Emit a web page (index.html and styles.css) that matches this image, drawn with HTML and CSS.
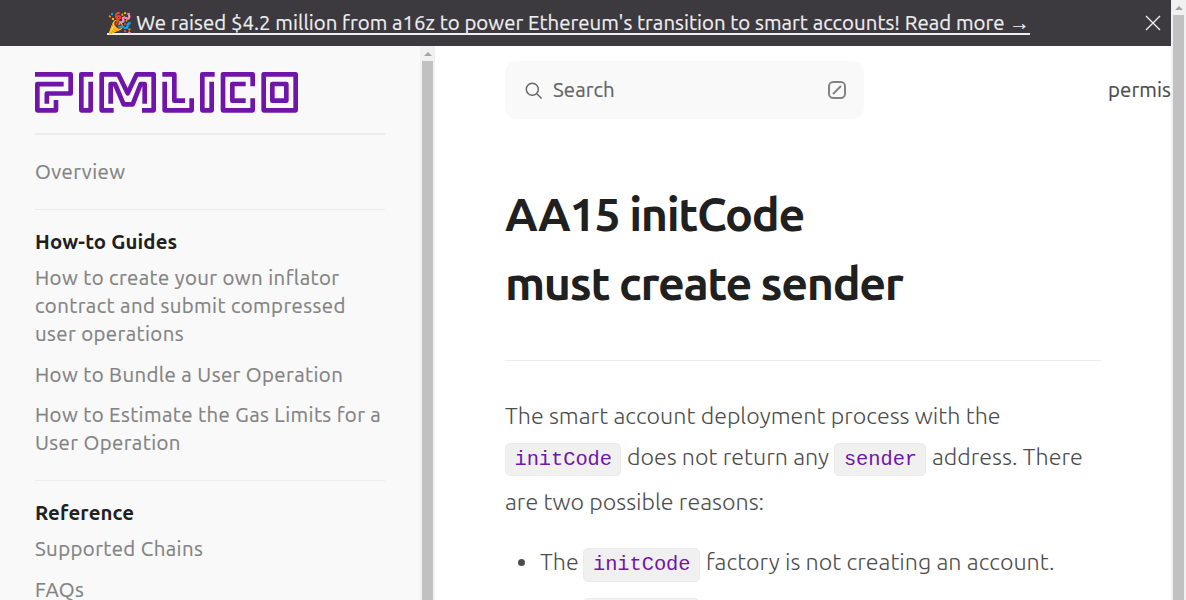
FILE: index.html
```html
<!DOCTYPE html>
<html lang="en">
<head>
<meta charset="utf-8">
<title>AA15 initCode must create sender</title>
<link rel="stylesheet" href="styles.css">
</head>
<body>
<div class="app">
  <div class="page">
    <header class="banner">
      <a class="banner-link"><span>🎉 We raised $4.2 million from a16z to power Ethereum's transition to smart accounts! Read more →</span></a>
      <svg class="close" viewBox="0 0 16 16"><path d="M1 1 15 15M15 1 1 15"/></svg>
    </header>
    <div class="body">
      <aside class="sidebar">
        <svg class="logo" viewBox="45 48 789 123">
          <path d="M45 55H152V112.500H80.500V143M131 84.500H52V163H108V132"/>
          <path d="M219 55H184V163H212V77"/>
          <path d="M281 163H245V55H295L323 112 350 55H401V163H366M272 143V84H285L311 145H338L362 84H374V143"/>
          <path d="M427 55H463V134H495M434 77V163H515V127"/>
          <path d="M584 55H547V163H575V77"/>
          <path d="M698 91V55H609V163H698V127M677 84H637V134H677"/>
          <path d="M731 55H827V163H731ZM757 84H799V134H757Z"/>
        </svg>
        <nav>
          <section class="group first"><a class="item">Overview</a></section>
          <section class="group">
            <h2>How-to Guides</h2>
            <a class="item">How to create your own inflator<br>contract and submit compressed<br>user operations</a>
            <a class="item">How to Bundle a User Operation</a>
            <a class="item">How to Estimate the Gas Limits for a<br>User Operation</a>
          </section>
          <section class="group">
            <h2>Reference</h2>
            <a class="item">Supported Chains</a>
            <a class="item">FAQs</a>
          </section>
        </nav>
      </aside>
      <div class="scrollbar"><i class="arrow"></i><i class="thumb"></i></div>
      <main class="main">
        <div class="topbar">
          <div class="search">
            <svg class="glass" viewBox="0 0 18 18"><circle cx="7.3" cy="7.3" r="6"/><path d="M11.8 11.8 16.6 16.6"/></svg>
            <span>Search</span>
            <svg class="slash" viewBox="0 0 18 18"><rect x="1" y="1" width="16" height="16" rx="4.2"/><path d="M5 13 13 5"/></svg>
          </div>
          <span class="crumb">permissionless.js</span>
        </div>
        <article>
          <h1>AA15 initCode<br>must create sender</h1>
          <p class="line l1">The smart account deployment process with the</p>
          <p class="line l2"><code>initCode</code><span class="mid">does not return any</span><code>sender</code><span class="end">address. There</span></p>
          <p class="line l3">are two possible reasons:</p>
          <ul>
            <li class="line"><i class="dot"></i><span class="the">The</span><code>initCode</code><span class="end">factory is not creating an account.</span></li>
            <li class="line next"><i class="dot"></i><span class="the">The</span><code>initCode</code></li>
          </ul>
        </article>
      </main>
    </div>
  </div>
  <div class="scrollbar"><i class="arrow"></i><i class="thumb"></i></div>
</div>
</body>
</html>
```
FILE: styles.css
```css
* { box-sizing: border-box; }
body { margin: 0; font-family: Ubuntu, "Noto Sans", sans-serif; font-size: 20.4px; overflow: hidden; background: #fff; }
h1, h2, p, ul { margin: 0; padding: 0; }
svg { fill: none; flex: none; }
.app { display: flex; width: 1186px; height: 600px; overflow: hidden; }
.page { width: 1171px; height: 600px; display: flex; flex-direction: column; overflow: hidden; }

.scrollbar { width: 15px; flex: none; background: #f1f1f1; display: flex; flex-direction: column; align-items: center; padding: 6px 2px 0; }
.arrow { border: 4px solid transparent; border-top: 0; border-bottom: 4px solid #a3a3a3; }
.thumb { width: 11px; flex: 1; margin: 5px 2px 0 0; background: #c1c1c1; align-self: flex-start; }

.banner { height: 46px; flex: none; background: #3c393f; color: #eeeef0; display: flex; align-items: center; padding: 0 10px 0 106.5px; justify-content: space-between; }
.banner-link { width: 923.5px; height: 24px; line-height: 24px; border-bottom: 2px solid #eeeef0; white-space: nowrap; letter-spacing: 0.04px; }
.banner-link, .item, .search span, .crumb { -webkit-text-stroke: 0.2px currentColor; }
.close { width: 16px; height: 16px; stroke: #eeeef0; stroke-width: 1.4; }

.body { flex: 1; display: flex; min-height: 0; }
.sidebar { width: 420px; flex: none; background: #f9f9f9; padding: 26px 35px 0; overflow: hidden; }
.logo { display: block; width: 263px; height: 41px; stroke: #7115aa; stroke-width: 14; stroke-linejoin: round; }
nav { margin-top: 20px; border-top: 2px solid #ececec; letter-spacing: 0.41px; }
.group { padding-top: 18px; border-top: 1px solid #ececec; }
.group.first { border: 0; padding-top: 23px; height: 74px; }
h2 { font-size: 20.4px; line-height: 28px; font-weight: 600; letter-spacing: 0.14px; color: #202020; margin-bottom: 8px; white-space: nowrap; }
.item { display: block; color: #838383; line-height: 28px; margin-bottom: 12.5px; white-space: nowrap; }
.group .item:last-child { margin-bottom: 23px; }

.main { flex: 1; min-width: 0; background: #fff; padding: 15px 0 0 70px; overflow: hidden; color: #4c4c4c; }
.topbar { height: 58px; display: flex; align-items: center; }
.search { width: 359px; height: 58px; flex: none; border-radius: 12px; background: #f9f9f9; color: #646464; display: flex; align-items: center; padding: 0 18px 1px 20px; }
.search span { margin-left: 10px; flex: 1; letter-spacing: 0.1px; }
.glass { width: 18px; height: 18px; stroke: #646464; stroke-width: 1.4; margin-top: 2px; }
.slash { width: 18px; height: 18px; stroke: #838383; stroke-width: 2; }
.crumb { margin-left: 244px; white-space: nowrap; margin-top: -2px; letter-spacing: 0.1px; }
article { width: 596px; }
h1 { margin-top: 61px; height: 181px; border-bottom: 1px solid #ececec; font-size: 46.6px; line-height: 69px; font-weight: 600; letter-spacing: -1.33px; color: #202020; white-space: nowrap; }
.line { height: 44px; display: flex; align-items: center; white-space: nowrap; font-size: 23.28px; font-weight: 300; color: #4c4c4c; }
.l1 { margin-top: 32px; }
.l2 { height: 42px; margin-top: -1px; }
.l2 span { margin-top: -2px; }
.l3 { margin-top: 1px; }
code { font: 400 20.4px "Liberation Mono", monospace; letter-spacing: -0.06px; color: #7115aa; background: #f0f0f0; border: 1px solid #ebebeb; border-radius: 5px; height: 33px; line-height: 31px; padding: 0 8.5px; flex: none; margin-top: 5px; }
.mid { width: 213px; padding-left: 5.5px; }
.end { padding-left: 5.5px; }
ul { margin-top: 16px; }
li code { height: 34px; margin-top: 8px; padding: 0 9px; }
.dot { width: 7px; height: 7px; border-radius: 50%; background: #4c4c4c; margin: 3px 15px 0 13px; }
.the { width: 43px; }
.next { margin-top: 6px; }
```
